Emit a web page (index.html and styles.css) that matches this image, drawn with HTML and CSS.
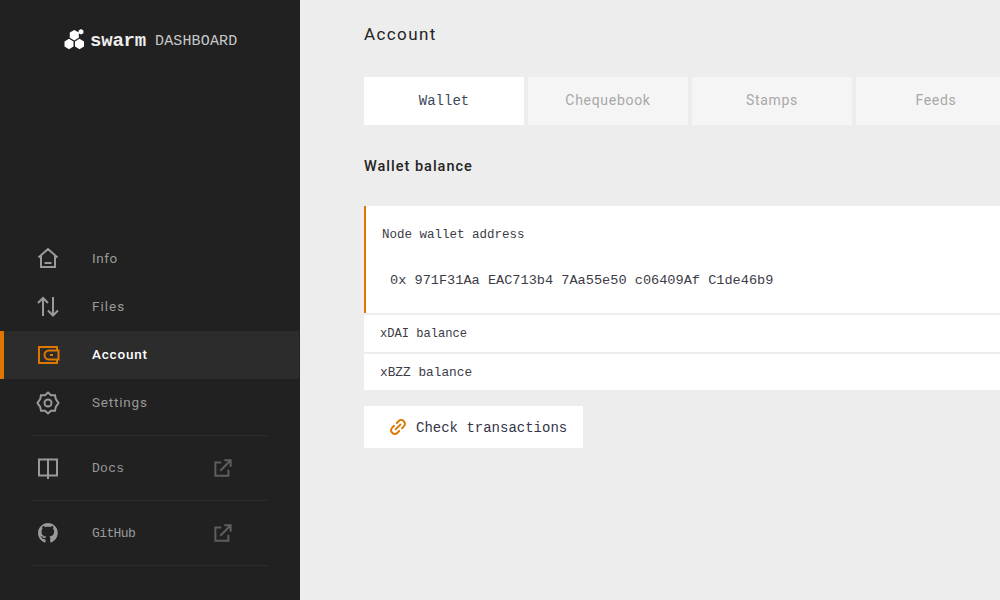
FILE: index.html
```html
<!DOCTYPE html>
<html lang="en">
<head>
<meta charset="utf-8">
<title>Swarm Dashboard</title>
<link rel="stylesheet" href="styles.css">
</head>
<body>
<div class="app">
  <aside class="sidebar">
    <div class="logo">
      <svg class="logo-mark" width="22" height="22" viewBox="0 0 22 22"><path class="white" d="M5 9.800L9.500 12.400V17.600L5 20.200 .5 17.600V12.400zM15.500 9.800L20 12.400V17.600L15.500 20.200 11 17.600V12.400zM10.300 1L14.800 3.600V8.800L10.300 11.400 5.800 8.800V3.600zM17 0L19.400 1.400V4.200L17 5.600 14.600 4.200V1.400z"/></svg>
      <span class="logo-swarm">swarm</span>
      <span class="logo-dash">DASHBOARD</span>
    </div>
    <nav class="nav">
      <a class="item"><svg class="icon" viewBox="0 0 24 24"><path d="M2.500 11.500L12 3l9.500 8.500M5 9.500V21h14V9.500M8.500 17h7"/></svg><span class="label sp-info">Info</span></a>
      <a class="item"><svg class="icon" viewBox="0 0 24 24"><path d="M7 22V4M2 9l5-5 5 5M17 3v18.500M12 16.500l5 5 5-5"/></svg><span class="label sp-files">Files</span></a>
      <a class="item active"><svg class="icon" viewBox="0 0 24 24"><path d="M21 7.500V4H3v16h18v-3.500M22.500 7.500H13a4.500 4.500 0 0 0 0 9h9.500zM14 12h3"/></svg><span class="label sp-account">Account</span></a>
      <a class="item"><svg class="icon" viewBox="0 0 24 24"><path d="M12 1.500l3 2.700 4 .1.800 3.900 2.700 3.800-2.700 3.800-.8 3.900-4 .1-3 2.700-3-2.700-4-.1-.8-3.900L1.500 12l2.700-3.800L5 4.300l4-.1z"/><circle cx="12" cy="12" r="3.500"/></svg><span class="label sp-settings">Settings</span></a>
    </nav>
    <div class="links">
      <a class="item link"><svg class="icon" viewBox="0 0 24 24"><path d="M3 3.500h8.500l.5.500.5-.5H21v16h-8.500l-.5.500-.5-.5H3zM12 4v19"/></svg><span class="label mono sp-docs">Docs</span><svg class="ext" viewBox="0 0 20 20"><path d="M8 4H1.500v14.500H16V12M7 13L18 2M11.500 1.500H18.500V8.500"/></svg></a>
      <a class="item link"><svg class="icon" viewBox="0 0 24 24"><path class="fill" d="M12 2C6.500 2 2 6.500 2 12c0 4.400 2.900 8.200 6.800 9.500.5.100.7-.2.700-.5v-2.800c-2.800.6-3.400-1.200-3.400-1.200-.5-1.200-1.100-1.500-1.100-1.500-.9-.6.100-.6.100-.6 1 .1 1.500 1 1.500 1 .9 1.500 2.300 1.100 2.900.8.100-.6.300-1.100.6-1.300-2.200-.3-4.600-1.100-4.600-5 0-1.100.4-2 1-2.700-.1-.3-.4-1.300.1-2.600 0 0 .8-.3 2.700 1 .8-.2 1.700-.3 2.500-.3s1.700.1 2.500.3c1.900-1.300 2.700-1 2.700-1 .5 1.400.2 2.400.1 2.600.6.700 1 1.600 1 2.700 0 3.800-2.300 4.700-4.600 4.900.4.300.7.900.7 1.900V21c0 .3.200.6.700.5 4-1.300 6.800-5.100 6.800-9.500C22 6.500 17.500 2 12 2z"/></svg><span class="label mono sp-github">GitHub</span><svg class="ext" viewBox="0 0 20 20"><path d="M8 4H1.500v14.500H16V12M7 13L18 2M11.500 1.500H18.500V8.500"/></svg></a>
    </div>
  </aside>
  <main class="main">
    <h1 class="title">Account</h1>
    <div class="tabs">
      <div class="tab current">Wallet</div>
      <div class="tab">Chequebook</div>
      <div class="tab">Stamps</div>
      <div class="tab">Feeds</div>
    </div>
    <h2 class="subtitle">Wallet balance</h2>
    <section class="address">
      <div class="address-label">Node wallet address</div>
      <div class="address-value">0x 971F31Aa EAC713b4 7Aa55e50 c06409Af C1de46b9</div>
    </section>
    <div class="row row-dai">xDAI balance</div>
    <div class="row row-bzz">xBZZ balance</div>
    <a class="button"><svg class="link-icon" viewBox="0 0 20 20"><path d="M8.500 5l2.500-2.500a4.200 4.200 0 0 1 5.900 0l.6.600a4.200 4.200 0 0 1 0 5.900L15 11.500M11.500 15L9 17.500a4.200 4.200 0 0 1-5.900 0l-.6-.6a4.200 4.200 0 0 1 0-5.900L5 8.500M7 13l6-6"/></svg><span>Check transactions</span></a>
  </main>
</div>
</body>
</html>
```

FILE: styles.css
```css
* { box-sizing: border-box; }
html, body { margin: 0; height: 100%; }
body { font-family: "Liberation Mono", "DejaVu Sans Mono", monospace; background: #ededed; overflow: hidden; }
.app { display: flex; height: 600px; width: 1000px; overflow: hidden; }

.sidebar { width: 300px; flex: none; background: #212121; display: flex; flex-direction: column; }
.logo { display: flex; align-items: center; height: 80px; padding-left: 64px; }
.logo-mark { margin-right: 4px; }
.logo-mark .white { fill: #fff; }
.logo-swarm { font-size: 19px; color: #eee; letter-spacing: -.2px; margin: 2px 9px 0 0; font-weight: 700; }
.logo-dash { font-size: 15px; color: #c8c8c8; letter-spacing: .15px; margin-top: 2px; }

.nav { margin-top: 154px; }
.item { display: flex; align-items: center; height: 48px; padding-left: 36px; border-left: 4px solid transparent; }
.item:nth-child(3) { margin-top: 1px; }
.label { margin-left: 32px; font-family: Roboto, sans-serif; font-size: 13.500px; color: #9a9a9a; }
.mono { font-family: "Liberation Mono", monospace; font-size: 13px; }
.sp-info { letter-spacing: .6px; }
.sp-files { letter-spacing: 1px; }
.sp-account { letter-spacing: .8px; margin-bottom: 2px; }
.sp-settings { letter-spacing: .8px; margin-bottom: 2px; }
.sp-docs { letter-spacing: .3px; }
.sp-github { letter-spacing: -.6px; }
.icon { width: 24px; height: 24px; margin-left: -4px; fill: none; stroke: #9a9a9a; stroke-width: 2; }
.icon .fill { fill: #9a9a9a; stroke: none; }
.active { background: #2c2c2c; border-left-color: #dd7700; margin-right: 1px; }
.active .label { color: #fff; font-weight: 500; }
.active .icon { stroke: #dd7700; }

.links { margin: 8px 32px 0; border-top: 1px solid #2c2c2c; }
.link { height: 65px; padding-left: 0; border-left: 0; border-bottom: 1px solid #2c2c2c; }
.link .icon { margin-left: 4px; }
.ext { width: 18px; height: 18px; margin-left: auto; margin-right: 36px; fill: none; stroke: #5e5e5e; stroke-width: 2.200; }

.main { flex: 1; min-width: 0; padding-left: 64px; overflow: hidden; }
.title { margin: 0; height: 77px; padding-top: 25px; font-family: Roboto, sans-serif; font-size: 17px; line-height: 18px; font-weight: 400; color: #242424; letter-spacing: 1.400px; }
.tabs { display: flex; gap: 4px; width: 700px; }
.tab { width: 160px; flex: none; height: 48px; padding-bottom: 2px; background: #f5f5f5; color: #a8a8a8; display: flex; align-items: center; justify-content: center; font-family: Roboto, sans-serif; font-size: 14px; letter-spacing: .7px; }
.tab.current { padding-bottom: 0; background: #fff; color: #3a4a5a; font-family: "Liberation Mono", monospace; letter-spacing: 0; }
.subtitle { margin: 0; height: 81px; padding-top: 34px; font-family: Roboto, sans-serif; font-size: 14.500px; line-height: 16px; font-weight: 500; color: #242424; letter-spacing: 1px; }

.address { background: #fff; border-left: 2px solid #dd7700; height: 107px; padding: 21px 0 0 16px; color: #3c3c46; }
.address-label { font-size: 12.500px; line-height: 16px; }
.address-value { margin: 30px 0 0 8px; font-size: 13.600px; line-height: 16px; white-space: nowrap; }
.row { background: #fff; display: flex; align-items: center; padding-left: 16px; color: #3c3c46; font-size: 12.800px; }
.row-dai { margin-top: 2px; height: 37px; font-size: 12.100px; }
.row-bzz { margin-top: 2px; height: 36px; }
.button { display: inline-flex; align-items: center; margin-top: 16px; height: 42px; width: 219px; padding: 2px 0 0 26px; background: #fff; color: #34344a; font-size: 14px; }
.link-icon { width: 16px; height: 16px; margin: -2px 10px 0 0; fill: none; stroke: #dd7700; stroke-width: 2.400; stroke-linecap: round; }
```
